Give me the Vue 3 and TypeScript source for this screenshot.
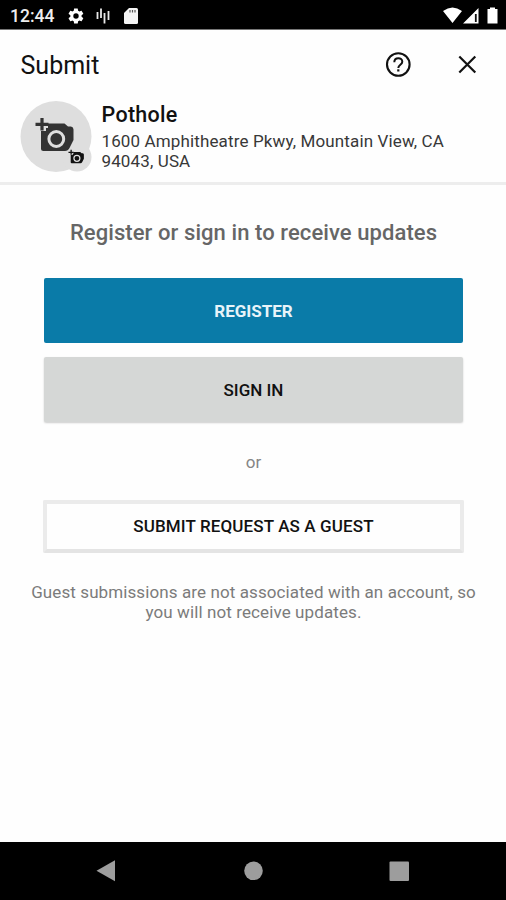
<script setup lang="ts">
const addressLines: string[] = ['1600 Amphitheatre Pkwy, Mountain View, CA', '94043, USA']
const guestLines: string[] = [
  'Guest submissions are not associated with an account, so',
  'you will not receive updates.',
]
</script>

<template>
  <div class="screen">
    <div class="status">
      <span class="clock">12:44</span>
      <svg class="gear" viewBox="0 0 24 24"><path fill="#fff" fill-rule="evenodd" d="M19.4 13a7.8 7.8 0 0 0 0-2l2.1-1.6c.2-.2.3-.4.1-.7l-2-3.4c-.1-.3-.4-.3-.6-.2l-2.5 1c-.5-.4-1.1-.7-1.7-1l-.4-2.6c0-.3-.2-.5-.5-.5h-4c-.3 0-.5.2-.5.4L9 5.1c-.6.2-1.2.6-1.7 1l-2.5-1c-.2-.1-.5 0-.6.2l-2 3.4c-.1.3-.1.5.1.7L4.500 11a7.8 7.8 0 0 0 0 2l-2.2 1.6c-.2.2-.2.4-.1.7l2 3.4c.1.3.4.3.6.2l2.5-1c.5.4 1.1.7 1.7 1l.4 2.600c0 .3.2.5.5.5h4c.3 0 .5-.2.5-.4l.4-2.700c.6-.2 1.200-.6 1.700-1l2.500 1c.2.1.5 0 .6-.2l2-3.400c.1-.3.1-.5-.1-.7zM12 15.600a3.600 3.600 0 1 1 0-7.200 3.600 3.600 0 0 1 0 7.200z" /></svg>
      <svg class="bars" viewBox="0 0 14 16"><path fill="none" stroke="#e8e8e8" stroke-width="1.800" d="M1.500 4v7M5 .5V10M8.500 5v10.500M12.500 3v9" /></svg>
      <svg class="card" viewBox="0 0 14 16"><path fill="#f4f4f4" d="M5 0h7.500Q14 0 14 1.500v13Q14 16 12.500 16h-11Q0 16 0 14.500V5z" /><path stroke="#555" stroke-width="1.200" d="M6 2v2.600M8.500 2v2.600M11 2v2.600" /></svg>
      <svg class="signals" viewBox="0 0 56 18"><path fill="#fff" d="M0 4Q9.500-3 19 4L9.500 16zM35.500 1v15.500H20z" /><path stroke="#111" stroke-width="1.800" d="M32.800 7v8" /><path fill="#fff" d="M47 .5h5V2h2.500v14.500h-10V2H47z" /></svg>
    </div>

    <header class="header">
      <div class="toolbar">
        <h1 class="title">Submit</h1>
        <button class="icon-button help" aria-label="Help">
          <svg viewBox="0 0 26 26" fill="none" stroke="#111"><circle cx="13.300" cy="12.500" r="11.300" stroke-width="2.100" /><path stroke-width="2" d="M9.300 10.200C9.300 4.900 17.300 4.900 17.300 9.700c0 3-4 3-4 6.200" /><path stroke-width="2.200" d="M13.300 17.300v2.200" /></svg>
        </button>
        <button class="icon-button" aria-label="Close">
          <svg viewBox="0 0 26 26" fill="none" stroke="#111" stroke-width="2.200"><path d="M5.300 4.500l16 16M21.300 4.500l-16 16" /></svg>
        </button>
      </div>
      <div class="request">
        <svg class="avatar" viewBox="0 0 72 73">
          <defs>
            <g id="camera-plus">
              <path fill="currentColor" d="M28 23.500h16.500l3.500 3h3q2.500.5 2.500 3v10.500L49.500 48q-1.500 3-4.500 3H23.500q-2.500 0-2.500-2.500V31h5v-3h2z" />
              <circle cx="36.300" cy="39" r="7.400" fill="none" stroke="#dedede" stroke-width="3" />
              <path fill="none" stroke="currentColor" stroke-width="3.200" d="M15.500 24.300h13M22 18v12.500" />
            </g>
          </defs>
          <circle cx="36" cy="36.500" r="35.500" fill="#dedede" />
          <circle cx="57" cy="57" r="14.500" fill="#dedede" />
          <use href="#camera-plus" class="camera" />
          <use href="#camera-plus" class="camera-small" transform="translate(42.200 42.500) scale(.405)" />
        </svg>
        <div class="details">
          <h2 class="name">Pothole</h2>
          <p v-for="line in addressLines" :key="line" class="address">{{ line }}</p>
        </div>
      </div>
    </header>

    <main class="content">
      <h2 class="prompt">Register or sign in to receive updates</h2>
      <button class="button primary">REGISTER</button>
      <button class="button secondary">SIGN IN</button>
      <p class="or">or</p>
      <button class="button guest">SUBMIT REQUEST AS A GUEST</button>
      <div class="note"><p v-for="line in guestLines" :key="line">{{ line }}</p></div>
    </main>

    <nav class="navigation">
      <svg viewBox="0 0 506 58" fill="#9d9d9d"><path d="M96.500 28.800L115 18.300v21z" /><circle cx="253.500" cy="28.800" r="9.300" /><rect x="389.500" y="19.500" width="19.500" height="19.500" rx="1" /></svg>
    </nav>
  </div>
</template>

<style>
body { background: #fefefe; }
</style>

<style scoped>
* { box-sizing: border-box; }
h1, h2, p { margin: 0; font-weight: 400; }
button { font-family: inherit; padding: 0; border: 0; background: none; }
svg { display: block; flex: none; }
.screen { width: 506px; height: 900px; display: flex; flex-direction: column; font-family: Roboto, sans-serif; background: #fefefe; overflow: hidden; }
.status { height: 30px; flex: none; background: #000; border-bottom: 1px solid #777; display: flex; align-items: center; color: #eee; padding: 2px 7px 0 10px; }
.clock { width: 57px; font-size: 17.500px; font-weight: 500; white-space: nowrap; }
.gear { width: 18px; height: 18px; }
.bars { width: 14px; height: 16px; margin-left: 11px; }
.card { width: 14px; height: 16px; margin-left: 14px; }
.signals { width: 56px; height: 18px; margin-left: auto; }
.header { height: 155px; flex: none; border-bottom: 3px solid #ededed; }
.toolbar { height: 70px; display: flex; align-items: center; padding: 0 26px 0 20.500px; }
.title { flex: 1; font-size: 25px; line-height: 30px; color: #111; padding-top: 2px; }
.icon-button, .icon-button svg { width: 26px; height: 26px; }
.help { margin-right: 43px; }
.request { display: flex; padding-left: 20px; }
.avatar { width: 72px; height: 73px; }
.camera { color: #333; }
.camera-small { color: #111; }
.details { padding: 1px 0 0 9.500px; }
.name { font-size: 21.500px; letter-spacing: .3px; line-height: 28px; margin-bottom: 2px; font-weight: 500; color: #111; }
.address { font-size: 17px; letter-spacing: .13px; line-height: 20px; color: #383838; white-space: nowrap; }
.content { flex: 1; display: flex; flex-direction: column; align-items: center; padding: 34px 0 0 1px; }
.prompt { font-size: 22px; letter-spacing: .08px; line-height: 28px; font-weight: 500; color: #666; white-space: nowrap; }
.button { width: 419px; font-size: 17px; font-weight: 500; border-radius: 2px; }
.primary { height: 65px; margin-top: 31px; background: #0a7ba8; color: #e8f4f9; font-weight: 700; }
.secondary { height: 65px; margin-top: 14px; background: #d5d7d6; color: #111; box-shadow: 0 1px 2px #ccc; }
.or { font-size: 17px; line-height: 22px; margin-top: 29px; color: #858585; }
.guest { width: 421px; height: 53px; margin-top: 27px; padding-bottom: 2px; border: 4px solid #ebebeb; border-bottom-color: #e4e4e4; color: #111; letter-spacing: .12px; }
.note { margin-top: 29px; font-size: 17px; letter-spacing: .1px; line-height: 20px; color: #7b7b7b; text-align: center; white-space: nowrap; }
.navigation { height: 58px; flex: none; background: #000; }
.navigation svg { width: 506px; height: 58px; }
</style>
